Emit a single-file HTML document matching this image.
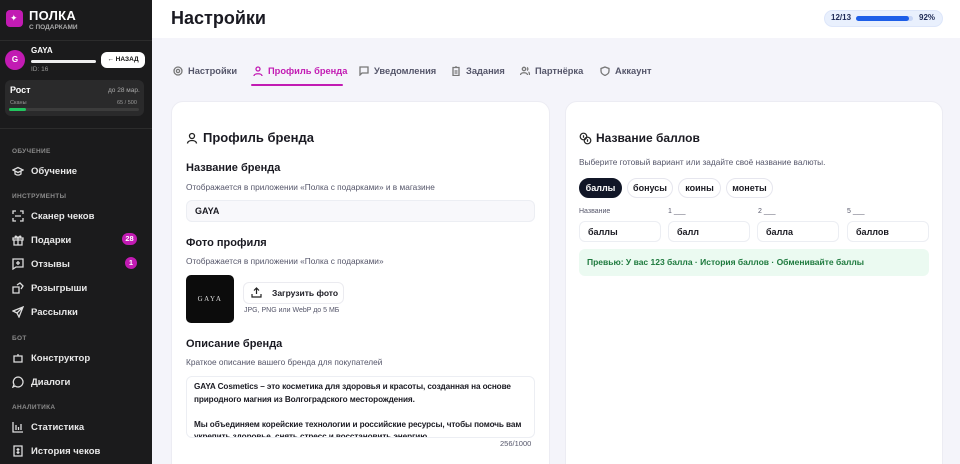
<!DOCTYPE html>
<html><head><meta charset="utf-8"><style>
*{box-sizing:border-box;margin:0;padding:0}
html,body{width:960px;height:464px;overflow:hidden}
body{font-family:"Liberation Sans","Noto Sans CJK SC",sans-serif;background:#f4f4fa;position:relative;color:#1a1a22}
.sb{position:absolute;left:0;top:0;width:152px;height:464px;background:#1b1b1c;color:#eee}
.abs{position:absolute}
.sec{position:absolute;left:12px;font-size:6.5px;color:#8a8a8a;font-weight:bold;letter-spacing:.3px}
.it{position:absolute;left:12px;font-size:9.5px;color:#e8e8e8;display:flex;align-items:center;gap:7px;font-weight:bold}
.it svg{width:12px;height:12px;stroke:#ddd;fill:none;stroke-width:1.3}
.badge{position:absolute;background:#c21bb3;color:#fff;font-size:7.5px;font-weight:bold;border-radius:8px;text-align:center;line-height:12px;height:12px}
.card{position:absolute;background:#fff;border-radius:12px;top:101px;height:380px;border:1px solid #ececf3}
.h{font-weight:bold;font-size:11px;position:absolute}
.s{font-size:8.3px;color:#55566a;position:absolute}
.tab{position:absolute;top:66px;font-size:9.3px;font-weight:bold;color:#55566a;display:flex;align-items:center;gap:5px}
.tab svg{width:10px;height:10px;stroke:#777;fill:none;stroke-width:1.3}
.inp{position:absolute;background:#fff;border:1px solid #eceef3;border-radius:6px;font-size:9px;font-weight:bold;padding-left:8px;display:flex;align-items:center}
.chip{position:absolute;top:178px;height:20px;border:1px solid #e6e6ee;border-radius:10px;font-size:9px;font-weight:bold;display:flex;align-items:center;justify-content:center}
</style></head><body>
<div class="sb">
 <div class="abs" style="left:6px;top:10px;width:17px;height:17px;border-radius:4px;background:#c21bb3"></div>
 <div class="abs" style="left:10px;top:13px;color:#fff;font-size:9px">✦</div>
 <div class="abs" style="left:29px;top:8px;font-size:13px;font-weight:900;color:#fff;letter-spacing:.3px">ПОЛКА</div>
 <div class="abs" style="left:29px;top:24px;font-size:6.5px;color:#aaa;font-weight:bold">С ПОДАРКАМИ</div>
 <div class="abs" style="left:0;top:40px;width:152px;height:1px;background:#2c2c2c"></div>
 <div class="abs" style="left:5px;top:50px;width:20px;height:20px;border-radius:50%;background:#c21bb3;color:#fff;font-size:8px;font-weight:bold;text-align:center;line-height:20px">G</div>
 <div class="abs" style="left:31px;top:46px;font-size:8px;font-weight:bold;color:#fff">GAYA</div>
 <div class="abs" style="left:31px;top:60px;width:65px;height:3px;background:#eee;border-radius:2px"></div>
 <div class="abs" style="left:31px;top:66px;font-size:6.5px;color:#999">ID: 16</div>
 <div class="abs" style="left:101px;top:52px;width:44px;height:16px;background:#fff;border-radius:6px;color:#111;font-size:6.5px;font-weight:bold;text-align:center;line-height:16px">← НАЗАД</div>
 <div class="abs" style="left:5px;top:80px;width:139px;height:36px;background:#2a2a2b;border-radius:6px"></div>
 <div class="abs" style="left:10px;top:85px;font-size:9px;font-weight:bold;color:#fff">Рост</div>
 <div class="abs" style="left:108px;top:87px;font-size:6.5px;color:#aaa">до 28 мар.</div>
 <div class="abs" style="left:10px;top:100px;font-size:5.5px;color:#999">Сканы</div>
 <div class="abs" style="left:117px;top:100px;font-size:5.5px;color:#999">65 / 500</div>
 <div class="abs" style="left:9px;top:108px;width:130px;height:3px;background:#3c3c3c;border-radius:2px"></div>
 <div class="abs" style="left:9px;top:108px;width:17px;height:3px;background:#22c55e;border-radius:2px"></div>
 <div class="abs" style="left:0;top:128px;width:152px;height:1px;background:#2c2c2c"></div>
 <div class="sec" style="top:148px">ОБУЧЕНИЕ</div>
 <div class="it" style="top:165px"><svg viewBox="0 0 12 12"><path d="M1 5l5-2.5 5 2.5-5 2.5z M3 6v3c2 1.5 4 1.5 6 0V6"/></svg>Обучение</div>
 <div class="sec" style="top:193px">ИНСТРУМЕНТЫ</div>
 <div class="it" style="top:210px"><svg viewBox="0 0 12 12"><path d="M1 4V1h3M8 1h3v3M11 8v3H8M4 11H1V8M3 6h6"/></svg>Сканер чеков</div>
 <div class="it" style="top:234px"><svg viewBox="0 0 12 12"><path d="M1 4h10v2H1zM2 6v5h8V6M6 4v7M6 4C4 1 2 2 4 4M6 4c2-3 4-2 2 0"/></svg>Подарки</div>
 <div class="badge" style="left:122px;top:233px;width:15px">28</div>
 <div class="it" style="top:258px"><svg viewBox="0 0 12 12"><path d="M1 1h10v8H4l-3 2zM6 3v4M4 5h4"/></svg>Отзывы</div>
 <div class="badge" style="left:125px;top:257px;width:12px">1</div>
 <div class="it" style="top:282px"><svg viewBox="0 0 12 12"><path d="M1 5h6v6H1zM5 3l3-2 3 3-2 3"/></svg>Розыгрыши</div>
 <div class="it" style="top:306px"><svg viewBox="0 0 12 12"><path d="M1 5l10-4-4 10-2-4zM5 7l6-6"/></svg>Рассылки</div>
 <div class="sec" style="top:335px">БОТ</div>
 <div class="it" style="top:352px"><svg viewBox="0 0 12 12"><path d="M2 4h8v6H2zM6 2v2M4.5 7h0M7.5 7h0"/></svg>Конструктор</div>
 <div class="it" style="top:376px"><svg viewBox="0 0 12 12"><path d="M6 1a5 5 0 1 1-3 9l-2 1 1-2.5A5 5 0 0 1 6 1z"/></svg>Диалоги</div>
 <div class="sec" style="top:404px">АНАЛИТИКА</div>
 <div class="it" style="top:421px"><svg viewBox="0 0 12 12"><path d="M1 1v10h10M4 4v5M6.5 6v3M9 3v6"/></svg>Статистика</div>
 <div class="it" style="top:445px"><svg viewBox="0 0 12 12"><path d="M2 1h8v10H2zM6 3v6M4.5 4.5h3M4.5 7.5h3"/></svg>История чеков</div>
</div>
<div class="abs" style="left:152px;top:0;width:808px;height:38px;background:#fff"></div>
<div class="abs" style="left:171px;top:8px;font-size:18px;font-weight:900">Настройки</div>
<div class="abs" style="left:824px;top:10px;width:119px;height:17px;border-radius:9px;background:#e9f0fd;border:1px solid #dde6fa"></div>
<div class="abs" style="left:831px;top:13px;font-size:8px;font-weight:bold;color:#1e2a55">12/13</div>
<div class="abs" style="left:856px;top:16px;width:57px;height:5px;border-radius:3px;background:#c8d6f6"></div>
<div class="abs" style="left:856px;top:16px;width:53px;height:5px;border-radius:3px;background:#1d5ee8"></div>
<div class="abs" style="left:919px;top:13px;font-size:8px;font-weight:bold;color:#1e2a55">92%</div>

<div class="tab" style="left:173px"><svg viewBox="0 0 10 10"><circle cx="5" cy="5" r="1.6"/><circle cx="5" cy="5" r="4"/></svg>Настройки</div>
<div class="tab" style="left:253px;color:#c21bb3"><svg viewBox="0 0 10 10" style="stroke:#c21bb3"><circle cx="5" cy="3" r="2"/><path d="M1 10c0-3 8-3 8 0"/></svg>Профиль бренда</div>
<div class="abs" style="left:251px;top:84px;width:92px;height:2px;background:#c21bb3;border-radius:1px"></div>
<div class="tab" style="left:359px"><svg viewBox="0 0 10 10"><path d="M1 1h8v6H3l-2 2z"/></svg>Уведомления</div>
<div class="tab" style="left:451px"><svg viewBox="0 0 10 10"><path d="M2 1.5h6V9.5H2zM4 1h2M3.5 5h3M3.5 7h3"/></svg>Задания</div>
<div class="tab" style="left:520px"><svg viewBox="0 0 10 10"><circle cx="4" cy="3" r="1.7"/><path d="M0.5 9c0-3 7-3 7 0M7 1.5a1.7 1.7 0 0 1 0 3M8.5 6c1 .5 1 2 1 3"/></svg>Партнёрка</div>
<div class="tab" style="left:600px"><svg viewBox="0 0 10 10"><path d="M5 1l4 1.5V5c0 2.5-2 3.5-4 4.5C3 8.5 1 7.5 1 5V2.5z"/></svg>Аккаунт</div>

<div class="card" style="left:171px;width:379px"></div>
<svg class="abs" style="left:186px;top:132px" width="12" height="12" viewBox="0 0 12 12" fill="none" stroke="#222" stroke-width="1.3"><circle cx="6" cy="4" r="2.5"/><path d="M1.5 11.5c0-4 9-4 9 0"/></svg>
<div class="h" style="left:203px;top:130px;font-size:13px">Профиль бренда</div>
<div class="h" style="left:186px;top:162px">Название бренда</div>
<div class="s" style="left:186px;top:182px">Отображается в приложении «Полка с подарками» и в магазине</div>
<div class="inp" style="left:186px;top:200px;width:349px;height:22px;background:#f8f8fb">GAYA</div>
<div class="h" style="left:186px;top:237px">Фото профиля</div>
<div class="s" style="left:186px;top:256px">Отображается в приложении «Полка с подарками»</div>
<div class="abs" style="left:186px;top:275px;width:48px;height:48px;border-radius:5px;background:#0c0c0c;color:#ddd;font-size:7px;letter-spacing:1.5px;text-align:center;line-height:48px;font-family:'Liberation Serif',serif">GAYA</div>
<div class="abs" style="left:243px;top:282px;width:101px;height:22px;border:1px solid #ebebf0;border-radius:6px;font-size:8.5px;font-weight:bold;line-height:20px;padding-left:28px">Загрузить фото</div>
<svg class="abs" style="left:251px;top:287px" width="11" height="11" viewBox="0 0 11 11" fill="none" stroke="#222" stroke-width="1.2"><path d="M5.5 7V1M3 3.5l2.5-2.5 2.5 2.5M1 7v3h9V7"/></svg>
<div class="s" style="left:244px;top:307px;font-size:7px">JPG, PNG или WebP до 5 МБ</div>
<div class="h" style="left:186px;top:338px">Описание бренда</div>
<div class="s" style="left:186px;top:357px">Краткое описание вашего бренда для покупателей</div>
<div class="abs" style="left:186px;top:376px;width:349px;height:62px;border:1px solid #eceef3;border-radius:6px;overflow:hidden;font-size:8.2px;font-weight:bold;line-height:12.5px;padding:4px 7px;letter-spacing:-.1px">GAYA Cosmetics – это косметика для здоровья и красоты, созданная на основе природного магния из Волгоградского месторождения.<br><br>Мы объединяем корейские технологии и российские ресурсы, чтобы помочь вам укрепить здоровье, снять стресс и восстановить энергию.</div>
<div class="s" style="left:500px;top:439px;font-size:7.5px">256/1000</div>

<div class="card" style="left:565px;width:378px"></div>
<svg class="abs" style="left:579px;top:132px" width="13" height="13" viewBox="0 0 13 13" fill="none" stroke="#222" stroke-width="1.2"><circle cx="4.5" cy="4.5" r="3.3"/><circle cx="8.5" cy="8.5" r="3.3"/><path d="M4.5 3.3v2.4M8.5 7.3v2.4"/></svg>
<div class="h" style="left:596px;top:131px;font-size:12px">Название баллов</div>
<div class="s" style="left:579px;top:157px">Выберите готовый вариант или задайте своё название валюты.</div>
<div class="chip" style="left:579px;width:43px;background:#111627;color:#fff;border-color:#111627">баллы</div>
<div class="chip" style="left:627px;width:46px">бонусы</div>
<div class="chip" style="left:678px;width:43px">коины</div>
<div class="chip" style="left:726px;width:47px">монеты</div>
<div class="s" style="left:579px;top:208px;font-size:7px">Название</div>
<div class="s" style="left:668px;top:208px;font-size:7px">1 ___</div>
<div class="s" style="left:758px;top:208px;font-size:7px">2 ___</div>
<div class="s" style="left:847px;top:208px;font-size:7px">5 ___</div>
<div class="inp" style="left:579px;top:221px;width:82px;height:21px">баллы</div>
<div class="inp" style="left:668px;top:221px;width:82px;height:21px">балл</div>
<div class="inp" style="left:757px;top:221px;width:82px;height:21px">балла</div>
<div class="inp" style="left:847px;top:221px;width:82px;height:21px">баллов</div>
<div class="abs" style="left:579px;top:249px;width:350px;height:27px;border-radius:6px;background:#ebfaf1;color:#1e7a3e;font-size:8.5px;font-weight:bold;line-height:27px;padding-left:8px">Превью: У вас 123 балла · История баллов · Обменивайте баллы</div>
</body></html>
